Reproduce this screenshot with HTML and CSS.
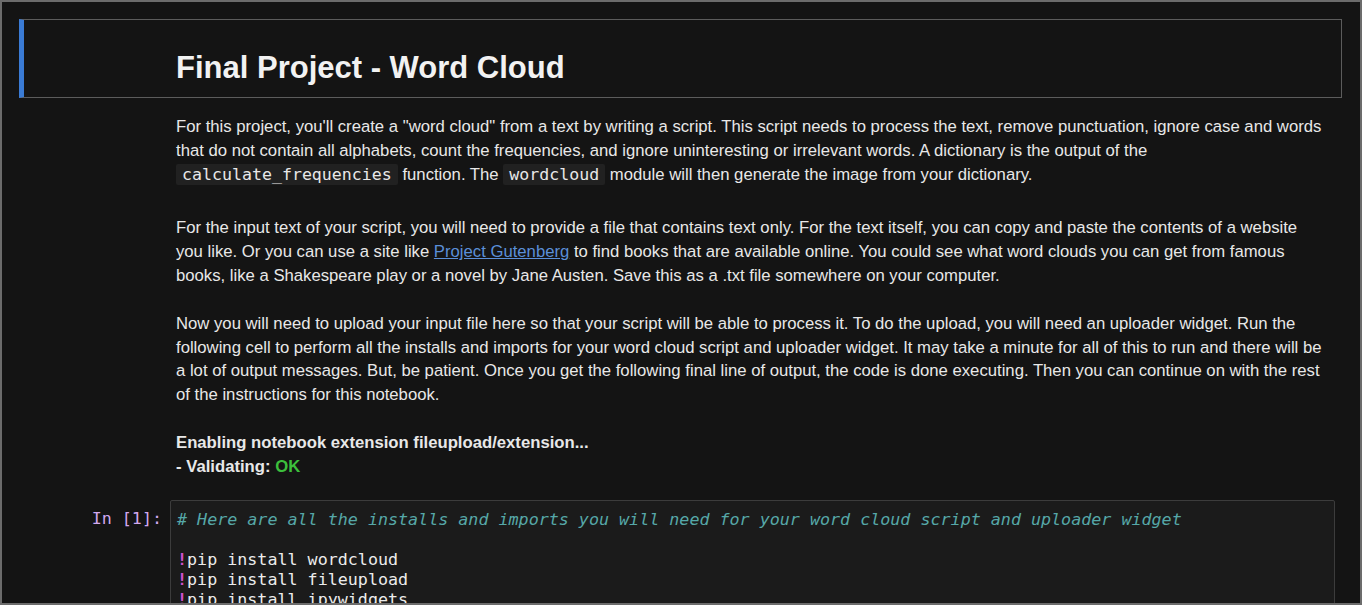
FILE: index.html
```html
<!DOCTYPE html>
<html>
<head>
<meta charset="utf-8">
<link rel="stylesheet" href="styles.css">
</head>
<body>
<div class="frame">
  <div class="cell heading-cell">
    <h1 class="title">Final Project - Word Cloud</h1>
  </div>
  <div class="cell md-cell">
    <div class="prompt"></div>
    <div class="md">
      <p class="first">For this project, you'll create a "word cloud" from a text by writing a script. This script needs to process the text, remove punctuation, ignore case and words that do not contain all alphabets, count the frequencies, and ignore uninteresting or irrelevant words. A dictionary is the output of the <code class="ic">calculate_frequencies</code> function. The <code class="ic">wordcloud</code> module will then generate the image from your dictionary.</p>
      <p>For the input text of your script, you will need to provide a file that contains text only. For the text itself, you can copy and paste the contents of a website you like. Or you can use a site like <a class="link" href="#">Project Gutenberg</a> to find books that are available online. You could see what word clouds you can get from famous books, like a Shakespeare play or a novel by Jane Austen. Save this as a .txt file somewhere on your computer.</p>
      <p>Now you will need to upload your input file here so that your script will be able to process it. To do the upload, you will need an uploader widget. Run the following cell to perform all the installs and imports for your word cloud script and uploader widget. It may take a minute for all of this to run and there will be a lot of output messages. But, be patient. Once you get the following final line of output, the code is done executing. Then you can continue on with the rest of the instructions for this notebook.</p>
      <p class="strong">Enabling notebook extension fileupload/extension...<br>- Validating: <span class="ok">OK</span></p>
    </div>
  </div>
  <div class="cell code-cell">
    <div class="prompt in">In&nbsp;[1]:</div>
    <div class="code-box"><pre class="code"><span class="cm"># Here are all the installs and imports you will need for your word cloud script and uploader widget</span>

<span class="bang">!</span>pip install wordcloud
<span class="bang">!</span>pip install fileupload
<span class="bang">!</span>pip install ipywidgets</pre></div>
  </div>
</div>
</body>
</html>
```

FILE: styles.css
```css
html, body {
  margin: 0;
  padding: 0;
  background: #141414;
}

.frame {
  width: 1362px;
  height: 605px;
  box-sizing: border-box;
  border: 2px solid #6c6c6c;
  background: #141414;
  padding: 17px 18px 0 17px;
  overflow: hidden;
  font-family: "Liberation Sans", Arial, sans-serif;
  color: #e8e8e8;
}

.cell {
  display: grid;
  grid-template-columns: 151px 1fr;
}

.heading-cell {
  display: block;
  border: 1px solid #5c5c5c;
  border-left: 5px solid #3a7bd5;
  padding: 30px 8px 11px 152px;
}

.title {
  margin: 0;
  font-size: 31px;
  line-height: 36px;
  font-weight: bold;
  color: #f2f2f2;
}

.md-cell {
  padding: 17px 16px 0 0;
}

.md {
  padding-left: 6px;
  font-size: 16.7px;
  line-height: 23.8px;
}

.md p {
  margin: 0 0 24px 0;
}

.md p.first {
  margin-bottom: 30px;
}

.ic {
  font-family: "DejaVu Sans Mono", monospace;
  font-size: 16.6px;
  background: #212121;
  padding: 1px 6px;
  border-radius: 2px;
  color: #e8e8e8;
}

.link {
  color: #5b8fd8;
  text-decoration: underline;
}

.strong {
  font-weight: bold;
}

.ok {
  color: #3cbf3c;
}

.code-cell {
  padding: 0 7px 0 0;
  margin-top: -3px;
}

.prompt.in {
  font-family: "DejaVu Sans Mono", monospace;
  font-size: 16.7px;
  line-height: 20.2px;
  color: #d2a8ee;
  text-align: right;
  padding: 8px 8px 0 0;
}

.code-box {
  background: #1b1b1b;
  border: 1px solid #3c3c3c;
  border-radius: 2px;
  padding: 8px 6px;
  min-height: 200px;
}

.code {
  margin: 0;
  font-family: "DejaVu Sans Mono", monospace;
  font-size: 16.7px;
  line-height: 20.2px;
  color: #ececec;
}

.cm {
  color: #56a8a8;
  font-style: italic;
}

.bang {
  color: #d251d2;
  font-weight: bold;
}
```
